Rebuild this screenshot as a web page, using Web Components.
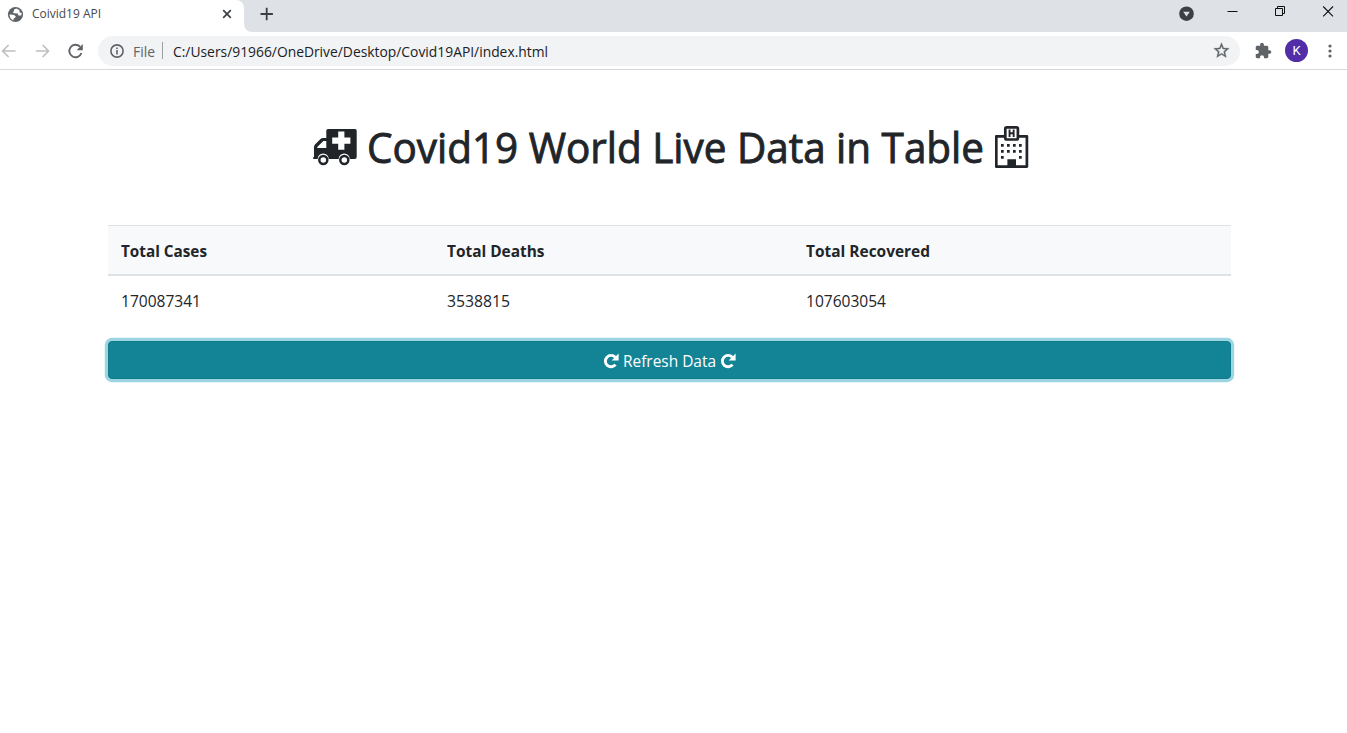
<!DOCTYPE html>
<html lang="en">
<head>
<meta charset="utf-8">
<title>Coivid19 API</title>
<style>
html,body{margin:0;height:100%;background:#fff;overflow:hidden}
body{font-family:"Open Sans","Noto Sans",sans-serif;color:#212529}
</style>
</head>
<body>
<browser-window>
  <tab-strip slot="tabs"><fit-text slot="title" w="69">Coivid19 API</fit-text></tab-strip>
  <address-bar slot="bar"><fit-text slot="scheme" w="22">File</fit-text><fit-text slot="url" w="375">C:/Users/91966/OneDrive/Desktop/Covid19API/index.html</fit-text></address-bar>
  <covid-page></covid-page>
</browser-window>
<script>
class Base extends HTMLElement {
  constructor() {
    super();
    const t = document.createElement('template');
    t.innerHTML = '<style>*{box-sizing:border-box}svg{display:block;flex:none}' + this.constructor.css + '</style>' + this.constructor.html;
    this.attachShadow({mode: 'open'}).append(t.content.cloneNode(true));
  }
}

/* One line of text condensed or widened to the width in its "w" attribute. */
class FitText extends Base {
  static css = ':host{display:inline-block;white-space:nowrap;flex:none}span{display:inline-block;transform-origin:0 50%}';
  static html = '<span><slot></slot></span>';
  connectedCallback() {
    const s = this.shadowRoot.querySelector('span'), w = +this.getAttribute('w');
    this.style.width = w + 'px';
    const fit = () => { if (s.offsetWidth) { s.style.transform = 'none'; s.style.transform = 'scaleX(' + w / s.getBoundingClientRect().width + ')'; } };
    fit();
    requestAnimationFrame(fit);
  }
}

class BrowserWindow extends Base {
  static css = ':host{display:flex;flex-direction:column;height:100vh}';
  static html = '<slot name="tabs"></slot><slot name="bar"></slot><slot></slot>';
}

class TabStrip extends Base {
  static css = `:host{display:flex;height:32px;background:#dee1e6;flex:none}
  .tab{width:244px;height:32px;background:#fff;display:flex;align-items:center;padding:0 11px 4px 7px;font-size:12px;color:#45494d;border-top-right-radius:8px}
  .tab .x{margin-left:auto}
  ::slotted(fit-text){margin-left:8px;margin-top:-1px}
  .rest{flex:1;background:#dee1e6;border-bottom-left-radius:8px;display:flex;padding-left:16px}
  .edge{flex:1;display:flex;background:#fff}
  .plus{margin-top:7px}.menu{margin:6px 0 0 auto}.min{margin:5px 0 0 32px}.max{margin:5px 0 0 36px}.close{margin:5px 13px 0 35px}`;
  static html = `<div class="tab">
    <svg width="17" height="17" viewBox="0 0 17 17"><circle cx="8.5" cy="8.5" r="7.6" fill="#5f6368"/><path d="M9.4 2.6 7 3.4 7.1 5 5.7 6.2 7.2 7.3 10.7 7.4 11.4 9.4 14.2 9.6 14.8 7.2 12.7 6.2 12.3 4.1ZM2.3 8.4 6.6 8.7 8.8 10.2 8 12.1 6.7 12.5 6.3 14.5 3.6 12.6Z" fill="#fff"/></svg>
    <slot name="title"></slot>
    <svg class="x" width="12" height="12" viewBox="0 0 12 12"><path d="m2.2 2.2 7.6 7.6m0-7.6-7.6 7.6" stroke="#3c4043" stroke-width="1.7"/></svg>
  </div>
  <div class="edge"><div class="rest">
    <svg class="plus" width="14" height="14" viewBox="0 0 14 14"><path d="M6.700 .8v12.4M.5 7h12.4" stroke="#3c4043" stroke-width="1.8"/></svg>
    <svg class="menu" width="15" height="15" viewBox="0 0 15 15"><circle cx="7.5" cy="7.7" r="7.3" fill="#3c4043"/><path d="M4.2 5.8h6.6L7.5 10.4Z" fill="#dee1e6"/></svg>
    <svg class="min" width="13" height="13" viewBox="0 0 13 13"><path d="M1.5 6.5h10" stroke="#111"/></svg>
    <svg class="max" width="12" height="13" viewBox="0 0 12 13" fill="none" stroke="#111"><path d="M.5 3.5h7v7h-7zM2.5 3V1.500h7v7H8"/></svg>
    <svg class="close" width="12" height="13" viewBox="0 0 12 13"><path d="m1.2 1.5 9.8 9.8m0-9.8-9.8 9.8" stroke="#111" stroke-width="1.1"/></svg>
  </div></div>`;
}

class AddressBar extends Base {
  static css = `:host{display:flex;align-items:center;height:37px;border-bottom:1px solid #d7d9dc;background:#fff;flex:none}
  .back{margin-left:1px}.fwd{margin-left:19px}.load{margin-left:17px}
  .box{margin-left:14px;width:1142px;height:30px;border-radius:15px;background:#f1f3f4;display:flex;align-items:center;padding:0 10px 0 12px;font-size:15px;color:#5f6368}
  slot[name=scheme]::slotted(*){margin-left:9px}
  .sep{width:1px;height:17px;background:#9aa0a6;margin:0 10px 0 7px}
  slot[name=url]::slotted(*){color:#202124}
  .star{margin-left:auto}.puz{margin-left:15px}
  .me{margin-left:13px;width:23px;height:23px;border-radius:50%;background:#512da8;color:#fff;font:400 13px/24px Roboto,sans-serif;text-align:center}
  .dots{margin-left:20px}`;
  static html = `<svg class="back" width="15" height="14" viewBox="0 0 15 14" fill="none" stroke="#bcbec1" stroke-width="1.6"><path d="M14.5 7H2M7.6 1 1.6 7l6 6"/></svg>
  <svg class="fwd" width="15" height="14" viewBox="0 0 15 14" fill="none" stroke="#bcbec1" stroke-width="1.6"><path d="M.8 7h12.7M7.6 1l6 6-6 6"/></svg>
  <svg class="load" width="17" height="16" viewBox="0 0 17 16"><path d="M13 3.7A6.2 6.2 0 1 0 14.4 10" fill="none" stroke="#5f6368" stroke-width="1.9"/><path d="M15.8 1v6.2H9.6Z" fill="#5f6368"/></svg>
  <div class="box">
    <svg width="14" height="14" viewBox="0 0 14 14"><circle cx="7" cy="7" r="6.1" fill="none" stroke="#5f6368" stroke-width="1.6"/><path d="M7 6v4.4M7 3.5v1.6" stroke="#5f6368" stroke-width="1.6"/></svg>
    <slot name="scheme"></slot><i class="sep"></i><slot name="url"></slot>
    <svg class="star" width="17" height="17" viewBox="1 1 22 22" fill="#5f6368" stroke="#5f6368" stroke-width=".4"><path d="M22 9.24l-7.19-.62L12 2 9.19 8.63 2 9.24l5.46 4.73L5.82 21 12 17.27 18.18 21l-1.63-7.03L22 9.24zM12 15.4l-3.76 2.27 1-4.28-3.32-2.88 4.38-.38L12 6.1l1.71 4.04 4.38.38-3.32 2.88 1 4.28L12 15.4z"/></svg>
  </div>
  <svg class="puz" width="17" height="17" viewBox="1 0 23 23" fill="#5f6368"><path d="M20.5 11H19V7c0-1.1-.9-2-2-2h-4V3.5C13 2.12 11.880 1 10.500 1S8 2.120 8 3.500V5H4c-1.100 0-1.990.9-1.990 2v3.800H3.500c1.490 0 2.700 1.210 2.700 2.700s-1.210 2.700-2.700 2.700H2V20c0 1.100.9 2 2 2h3.800v-1.500c0-1.490 1.210-2.700 2.700-2.700s2.700 1.210 2.700 2.700V22H17c1.100 0 2-.9 2-2v-4h1.500c1.380 0 2.500-1.120 2.500-2.500S21.880 11 20.500 11z"/></svg>
  <div class="me">K</div>
  <svg class="dots" width="4" height="14" viewBox="0 0 4 14" fill="#5f6368"><circle cx="2" cy="2" r="1.6"/><circle cx="2" cy="7" r="1.6"/><circle cx="2" cy="12" r="1.6"/></svg>`;
}

class DataTable extends Base {
  static css = `:host{display:block}
  .row{display:grid;grid-template-columns:326px 359px 1fr;padding:0 13px;align-items:center;height:50px;font-size:16px}
  .head{background:#f8f9fa;border-top:1px solid #dee2e6;border-bottom:2px solid #dee2e6;font-weight:700;height:51px}
  .head{padding-top:2px}`;
  static html = `<div class="row head"><fit-text w="86">Total Cases</fit-text><fit-text w="97.500">Total Deaths</fit-text><fit-text w="124">Total Recovered</fit-text></div>
  <div class="row"><fit-text w="80">170087341</fit-text><fit-text w="63">3538815</fit-text><fit-text w="80">107603054</fit-text></div>`;
}

const redo = '<svg width="16" height="16" viewBox="0 0 16 16"><path d="M12.200 4.200A5.700 5.700 0 1 0 12.500 11.700" fill="none" stroke="#fff" stroke-width="2.900"/><path d="M15.600.5v7H8.600Z" fill="#fff"/></svg>';
class RefreshButton extends Base {
  static css = `:host{display:block}
  button{width:100%;height:38px;display:flex;align-items:center;justify-content:center;gap:4px;border:1px solid #117a8b;border-radius:4px;background:#138496;box-shadow:0 0 0 3.2px rgba(58,176,195,.5);color:#fff;font:16px "Open Sans","Noto Sans",sans-serif;padding:1px 0 0;margin:0}`;
  static html = '<button>' + redo + '<fit-text w="93"><slot></slot></fit-text>' + redo + '</button>';
}

class CovidPage extends Base {
  static css = `:host{display:block;padding:48px 116px 0 108px}
  h1{margin:0;height:107px;display:flex;align-items:flex-start;padding-left:205px;font-weight:400;font-size:41.5px;line-height:58px}
  .amb{margin-top:9px}h1 fit-text{margin-left:9px;-webkit-text-stroke:.9px #212529}.hos{margin-top:7px;margin-left:11px}
  refresh-button{margin-top:15px}`;
  static html = `<h1>
    <svg class="amb" width="45" height="40" viewBox="313 127 45 40"><path fill="#212529" fill-rule="evenodd" d="M328 129h27q1.700 0 1.700 1.700V157q0 2-2 2h-5a5.500 5.500 0 0 0-11 0h-10a5.500 5.500 0 0 0-11 0H314q-1 0-1-1t1-1.200V147q0-1.500 1-2.500l5.500-5.600q1-1 2.500-1h3.300V130.700q0-1.700 1.700-1.700ZM338.200 131.600v6h-6v6.200h6v6h6.200v-6h6v-6.200h-6v-6ZM323.300 141l-6 6v1h9v-7Z"/><g fill="none" stroke="#212529" stroke-width="2.500"><circle cx="323.300" cy="160" r="4"/><circle cx="344.300" cy="160" r="4"/></g></svg>
    <fit-text w="617">Covid19 World Live Data in Table</fit-text>
    <svg class="hos" width="34" height="44" viewBox="995 125 34 44"><path d="M1005 136.300h-8.700v30.300h30.600v-30.300H1018" fill="none" stroke="#212529" stroke-width="2.700" stroke-linejoin="round"/><rect x="1005.300" y="127.300" width="12.600" height="12.200" rx="1.500" fill="#fff" stroke="#212529" stroke-width="2.700"/><path fill="#212529" d="M1008.600 129.500h1.900v2.700h2.200v-2.700h1.900v7.500h-1.900v-2.700h-2.200v2.700h-1.900ZM1007.400 159.200h8.600v7h-8.600ZM1001 144h2.700v2.700H1001ZM1007 144h2.700v2.700H1007ZM1013 144h2.700v2.700H1013ZM1019 144h2.700v2.700H1019ZM1001 150h2.700v2.700H1001ZM1007 150h2.700v2.700H1007ZM1013 150h2.700v2.700H1013ZM1019 150h2.700v2.700H1019ZM1001 156h2.700v2.700H1001ZM1019 156h2.700v2.700H1019Z"/></svg>
  </h1>
  <data-table></data-table>
  <refresh-button>Refresh Data</refresh-button>`;
}

customElements.define('fit-text', FitText);
customElements.define('data-table', DataTable);
customElements.define('refresh-button', RefreshButton);
customElements.define('tab-strip', TabStrip);
customElements.define('address-bar', AddressBar);
customElements.define('covid-page', CovidPage);
customElements.define('browser-window', BrowserWindow);
</script>
</body>
</html>
